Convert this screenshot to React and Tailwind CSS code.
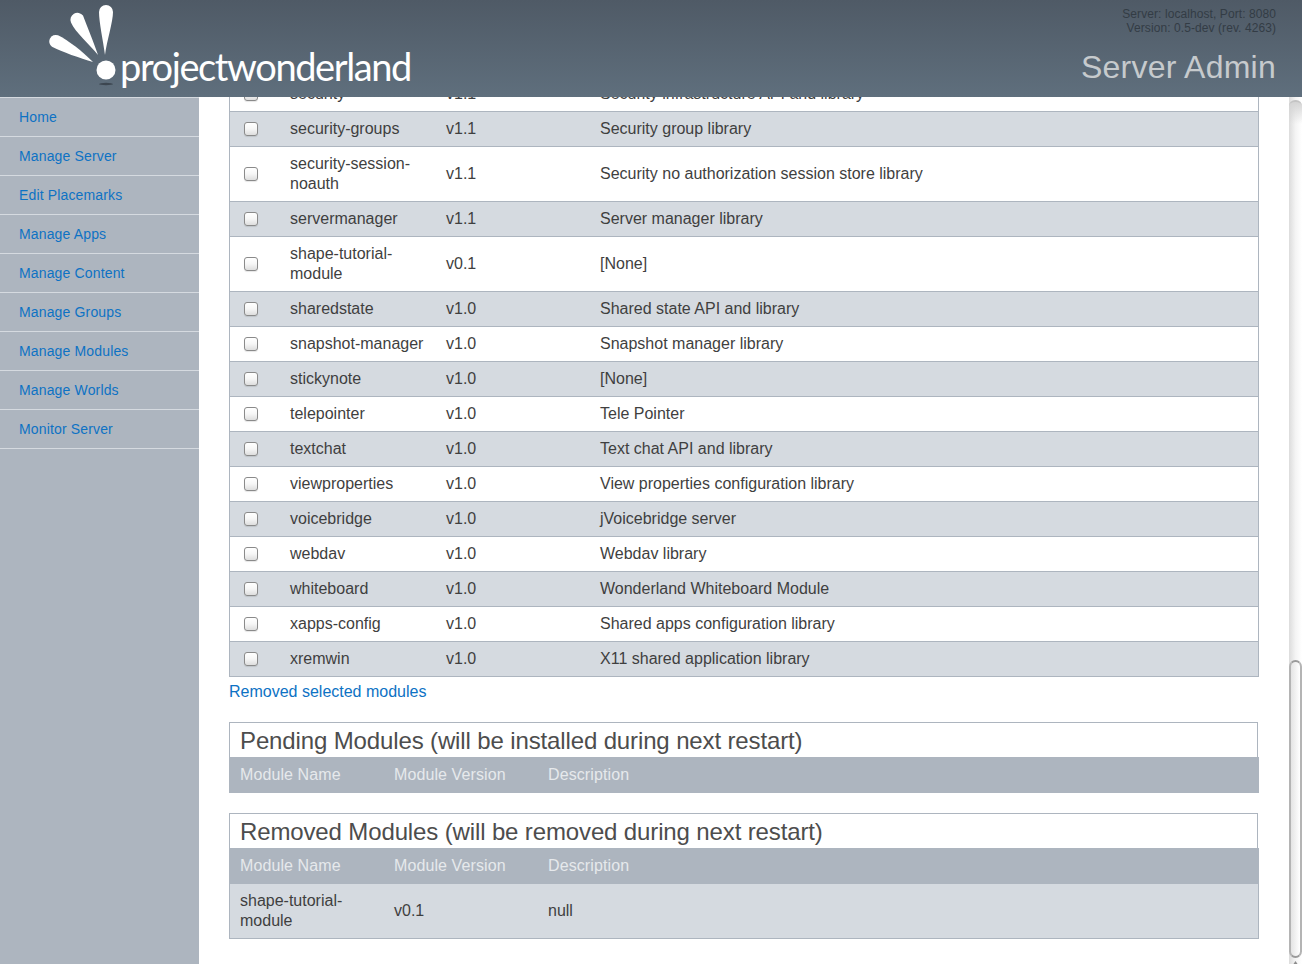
const navItems = [
  'Home',
  'Manage Server',
  'Edit Placemarks',
  'Manage Apps',
  'Manage Content',
  'Manage Groups',
  'Manage Modules',
  'Manage Worlds',
  'Monitor Server',
];

const modules = [
  { name: 'security', version: 'v1.1', description: 'Security infrastructure API and library' },
  { name: 'security-groups', version: 'v1.1', description: 'Security group library' },
  { name: 'security-session-noauth', version: 'v1.1', description: 'Security no authorization session store library' },
  { name: 'servermanager', version: 'v1.1', description: 'Server manager library' },
  { name: 'shape-tutorial-module', version: 'v0.1', description: '[None]' },
  { name: 'sharedstate', version: 'v1.0', description: 'Shared state API and library' },
  { name: 'snapshot-manager', version: 'v1.0', description: 'Snapshot manager library' },
  { name: 'stickynote', version: 'v1.0', description: '[None]' },
  { name: 'telepointer', version: 'v1.0', description: 'Tele Pointer' },
  { name: 'textchat', version: 'v1.0', description: 'Text chat API and library' },
  { name: 'viewproperties', version: 'v1.0', description: 'View properties configuration library' },
  { name: 'voicebridge', version: 'v1.0', description: 'jVoicebridge server' },
  { name: 'webdav', version: 'v1.0', description: 'Webdav library' },
  { name: 'whiteboard', version: 'v1.0', description: 'Wonderland Whiteboard Module' },
  { name: 'xapps-config', version: 'v1.0', description: 'Shared apps configuration library' },
  { name: 'xremwin', version: 'v1.0', description: 'X11 shared application library' },
];

function LogoMark() {
  return (
    <svg width="68" height="92" viewBox="49 0 68 92" className="shrink-0">
      <path fill="#fff" d="M105,55 C103,40 99,22 99,12 A7,7 0 0 1 113,12 C113,22 107,40 105,55Z" />
      <path fill="#fff" d="M98,55 C90,45 75,32 71,22.5 A7,7 0 0 1 83,15.5 C87,26 94,43 98,55Z" />
      <path fill="#fff" d="M93,62 C80,58 62,52 52,46.7 A6.5,6.5 0 0 1 58,35.3 C68,40 83,52 93,62Z" />
      <ellipse cx="106" cy="84" rx="7" ry="1.2" fill="#3c4650" />
      <circle cx="106" cy="70" r="9.5" fill="#fff" />
    </svg>
  );
}

function Header() {
  return (
    <header className="h-[97px] shrink-0 flex justify-between bg-gradient-to-b from-[#4f5a66] to-[#5f6f7d]">
      <div className="flex items-start pl-[49px]">
        <LogoMark />
        <span className="ml-[3px] mt-[42px] text-[38px] leading-[48px] tracking-[-1.4px] text-white font-['Lato',sans-serif] font-normal">
          projectwonderland
        </span>
      </div>
      <div className="pr-[26px] pt-[7px] text-right">
        <p className="text-[12px] leading-[14px] tracking-[0.08px] text-[#333c45]">Server: localhost, Port: 8080</p>
        <p className="text-[12px] leading-[14px] tracking-[0.08px] text-[#333c45]">Version: 0.5-dev (rev. 4263)</p>
        <p className="mt-[11px] text-[32px] leading-[42px] tracking-[0.25px] text-[#c6cacd]">Server Admin</p>
      </div>
    </header>
  );
}

function Sidebar() {
  return (
    <nav className="w-[199px] shrink-0 bg-[#adb5bf] border-t border-[#d5dae0]">
      {navItems.map((item) => (
        <a key={item} href="#" className="block h-[39px] pl-[19px] pt-[10px] text-[14px] leading-[18px] tracking-[0.15px] text-[#0d72c4] border-b border-[#d5dae0]">
          {item}
        </a>
      ))}
    </nav>
  );
}

function ModuleCheckbox() {
  return (
    <span className="block ml-[14px] w-[14px] h-[14px] rounded-[3px] border border-[#8a8a8a] bg-gradient-to-b from-white via-[#f6f6f6] to-[#dedede] shadow-[0_1px_1px_rgba(0,0,0,0.1)]" />
  );
}

function ModulesTable() {
  return (
    <table className="w-[1030px] table-fixed border-collapse border-x border-b border-[#adb5bf] -mt-[20px] text-[16px] leading-5 text-[#3f3f3f]">
      <colgroup>
        <col className="w-[51px]" />
        <col className="w-[156px]" />
        <col className="w-[154px]" />
        <col />
      </colgroup>
      <tbody>
        {modules.map((mod, i) => (
          <tr key={mod.name} className={`border-b border-[#adb5bf] ${i % 2 === 1 ? 'bg-[#d5dae0]' : 'bg-white'}`}>
            <td className="py-[7px]">
              <ModuleCheckbox />
            </td>
            <td className="py-[7px] pl-[9.5px] pr-[10px]">{mod.name}</td>
            <td className="py-[7px] pl-[9.5px] pr-[10px]">{mod.version}</td>
            <td className="py-[7px] pl-[9.5px] pr-[10px]">{mod.description}</td>
          </tr>
        ))}
      </tbody>
    </table>
  );
}

function StatusPanel({ title, row }) {
  return (
    <section className="w-[1030px]">
      <h2 className="h-[35px] mr-[1px] pl-[10px] border-x border-t border-[#adb5bf] text-[24px] leading-[36px] tracking-[-0.13px] text-[#4d4d4d] font-normal">
        {title}
      </h2>
      <div className="grid grid-cols-[154px_154px_1fr] h-[36px] pl-[11px] items-center bg-[#adb5bf] text-[16px] leading-5 tracking-[0.1px] text-[#e6e9ec]">
        <span>Module Name</span>
        <span>Module Version</span>
        <span>Description</span>
      </div>
      {row && (
        <div className="grid grid-cols-[154px_154px_1fr] pl-[10px] py-[7px] items-center bg-[#d5dae0] border-x border-b border-[#adb5bf] text-[16px] leading-5 text-[#3f3f3f]">
          <span className="w-[120px]">{row.name}</span>
          <span>{row.version}</span>
          <span>{row.description}</span>
        </div>
      )}
    </section>
  );
}

function FakeScrollbar() {
  return (
    <div className="w-[13px] shrink-0 flex flex-col bg-gradient-to-r from-[#dcdcdc] via-[#f4f4f4] to-white">
      <div className="mt-[3px] h-[24px] rounded-t-[6px] border-t-2 border-[#c4c4c4] bg-gradient-to-b from-[#d4d4d4] to-transparent" />
      <div className="mt-[536px] h-[298px] rounded-[7px] border-2 border-x-[#b4b4b4] border-y-[#9a9a9a] bg-gradient-to-r from-[#e4e4e4] to-white" />
      <svg width="13" height="6" viewBox="0 0 13 6" className="shrink-0">
        <path d="M6.5 3 L8.5 6 L4.5 6Z" fill="#8c8c8c" />
      </svg>
    </div>
  );
}

export default function App() {
  return (
    <div className="h-[964px] overflow-hidden flex flex-col bg-white font-['Liberation_Sans',Arial,sans-serif]">
      <Header />
      <div className="flex flex-1 min-h-0">
        <Sidebar />
        <main className="flex-1 overflow-hidden pl-[30px]">
          <ModulesTable />
          <a href="#" className="block mt-[5px] text-[16px] leading-5 text-[#0d72c4]">
            Removed selected modules
          </a>
          <div className="mt-[20px]">
            <StatusPanel title="Pending Modules (will be installed during next restart)" />
          </div>
          <div className="mt-[20px]">
            <StatusPanel
              title="Removed Modules (will be removed during next restart)"
              row={{ name: 'shape-tutorial-module', version: 'v0.1', description: 'null' }}
            />
          </div>
        </main>
        <FakeScrollbar />
      </div>
    </div>
  );
}
